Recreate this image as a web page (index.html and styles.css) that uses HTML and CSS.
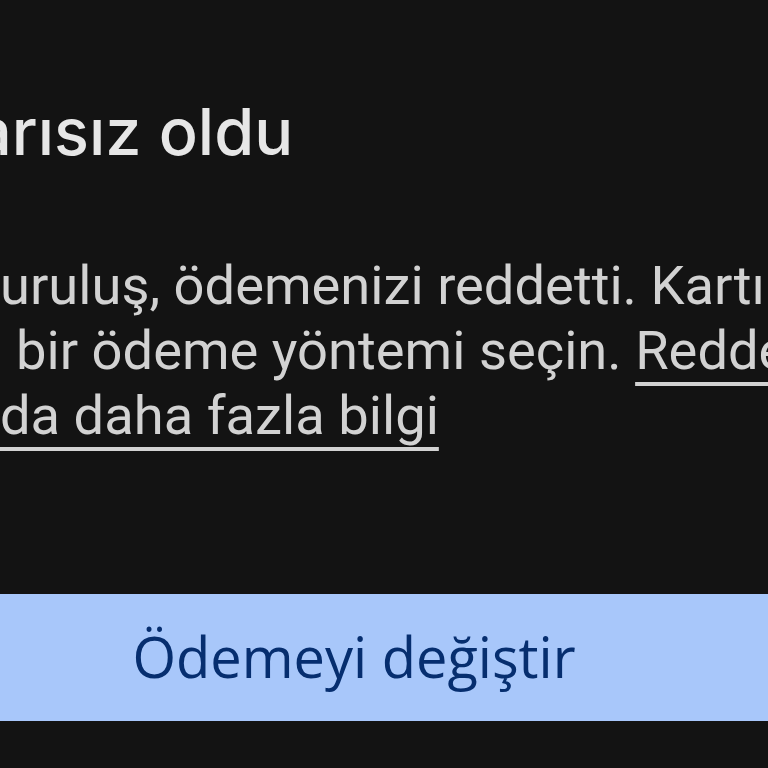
FILE: index.html
```html
<!DOCTYPE html>
<html lang="tr">
<head>
<meta charset="utf-8">
<link rel="stylesheet" href="styles.css">
</head>
<body>
<div class="dialog">
  <h1 class="title">arısız oldu</h1>
  <div class="message">
    <div class="line line1">uruluş, ödemenizi reddetti. Kartınızı</div>
    <div class="line line2">bir ödeme yöntemi seçin. <a class="link" href="#">Reddedilen ödemeler</a></div>
    <div class="line line3"><a class="link" href="#">da daha fazla bilgi</a></div>
  </div>
  <div class="actions">
    <button class="primary">Ödemeyi değiştir</button>
  </div>
</div>
</body>
</html>
```

FILE: styles.css
```css
html, body {
  margin: 0;
  padding: 0;
  background: #131313;
  overflow: hidden;
  width: 768px;
  height: 768px;
}
.dialog {
  display: flex;
  flex-direction: column;
  padding-top: 92px;
}
.title {
  margin: 0 0 0 -25px;
  font-family: Inter, sans-serif;
  font-weight: 500;
  font-size: 64.8px;
  line-height: 80px;
  color: #e6e6e6;
  white-space: nowrap;
  letter-spacing: 0;
}
.message {
  margin-top: 81px;
  font-family: Roboto, sans-serif;
  font-size: 54.3px;
  line-height: 65px;
  color: #d2d2d2;
  white-space: nowrap;
}
.line2 {
  padding-left: 16px;
}
.link {
  color: inherit;
  text-decoration: underline;
  text-decoration-thickness: 4px;
  text-underline-offset: 13px;
}
.actions {
  margin-top: 146px;
  margin-left: -100px;
  width: 908px;
}
.primary {
  display: block;
  width: 100%;
  height: 127px;
  border: none;
  border-radius: 0;
  background: #a8c7fa;
  color: #062e6f;
  font-family: "Open Sans", sans-serif;
  font-weight: 500;
  font-size: 56px;
  padding: 0 0 4px 0;
}
```
